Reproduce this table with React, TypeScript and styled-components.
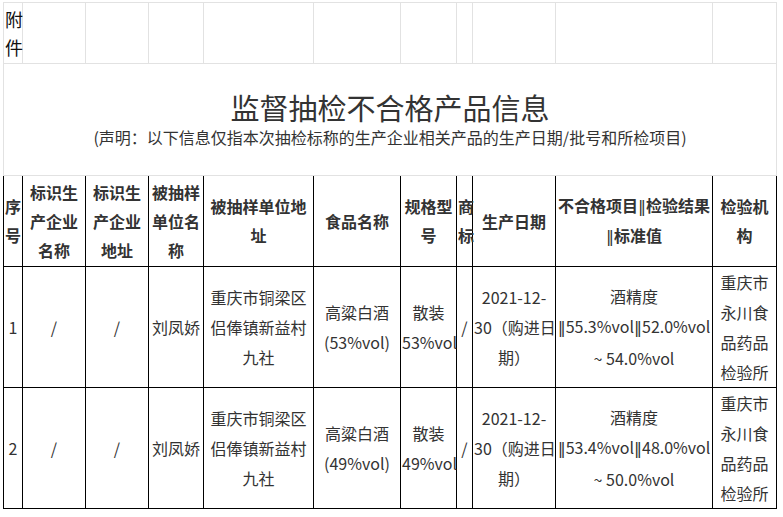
import React from "react";
import styled, { createGlobalStyle } from "styled-components";

const Global = createGlobalStyle`
  html, body { margin: 0; padding: 0; background: #fff; }
  body { font-family: "Noto Sans CJK SC", "Noto Sans", sans-serif; }
`;

const Page = styled.div`
  padding: 2px 0 0 3px;
`;

const Sheet = styled.table`
  border-collapse: collapse;
  table-layout: fixed;
  width: 774px;
  font-family: "Noto Sans CJK SC", "Noto Sans", sans-serif;
  color: #333;
`;

const Row = styled.tr<{ $h: number }>`
  height: ${(p) => p.$h}px;
`;

const BlankCell = styled.td`
  border: 1px solid #e2e2e2;
  padding: 0;
`;

const AttachCell = styled.td`
  border: 1px solid #e2e2e2;
  padding: 0 0 0 1px;
  font-size: 18px;
  line-height: 28px;
  color: #111;
  vertical-align: middle;
  text-align: left;
`;

const TitleCell = styled.td`
  border: 1px solid #e2e2e2;
  padding: 0;
  text-align: center;
  vertical-align: middle;
`;

const Title = styled.div`
  font-size: 29px;
  line-height: 34px;
  color: #333;
  padding-top: 4px;
`;

const Subtitle = styled.div`
  font-size: 16px;
  line-height: 26px;
  color: #333;
  padding-bottom: 4px;
`;

const HeadCell = styled.th`
  border: 1px solid #000;
  border-top-color: #e2e2e2;
  padding: 0 1px;
  font-size: 16px;
  line-height: 29px;
  font-weight: 700;
  color: #333;
  text-align: center;
  vertical-align: middle;
`;

const DataCell = styled.td`
  border: 1px solid #000;
  padding: 0 1px;
  font-size: 16px;
  line-height: 30px;
  color: #333;
  text-align: center;
  vertical-align: middle;
  white-space: nowrap;
  overflow: visible;
`;

const Bar = styled.span`
  font-family: "DejaVu Sans", sans-serif;
  font-size: 16px;
  font-weight: 400;
  letter-spacing: 0;
`;

const widths = [19, 63, 63, 55, 110, 87, 56, 16, 83, 157, 64];

type Rec = {
  no: string;
  food: string;
  spec: string;
  result: string;
  std: string;
  end: string;
};

const rows: Rec[] = [
  { no: "1", food: "(53%vol)", spec: "53%vol", result: "55.3%vol", std: "52.0%vol", end: "~ 54.0%vol" },
  { no: "2", food: "(49%vol)", spec: "49%vol", result: "53.4%vol", std: "48.0%vol", end: "~ 50.0%vol" },
];

const Lines: React.FC<{ items: React.ReactNode[] }> = ({ items }) => (
  <>
    {items.map((it, i) => (
      <React.Fragment key={i}>
        {i > 0 && <br />}
        {it}
      </React.Fragment>
    ))}
  </>
);

export default function App() {
  return (
    <Page>
      <Global />
      <Sheet>
        <colgroup>
          {widths.map((w, i) => (
            <col key={i} style={{ width: w }} />
          ))}
        </colgroup>
        <tbody>
          <Row $h={61}>
            <AttachCell>附<br />件</AttachCell>
            {widths.slice(1).map((_, i) => (
              <BlankCell key={i} />
            ))}
          </Row>
          <Row $h={112}>
            <TitleCell colSpan={11}>
              <Title>监督抽检不合格产品信息</Title>
              <Subtitle>(声明：以下信息仅指本次抽检标称的生产企业相关产品的生产日期/批号和所检项目)</Subtitle>
            </TitleCell>
          </Row>
          <Row $h={91}>
            <HeadCell>序<br />号</HeadCell>
            <HeadCell><Lines items={["标识生", "产企业", "名称"]} /></HeadCell>
            <HeadCell><Lines items={["标识生", "产企业", "地址"]} /></HeadCell>
            <HeadCell><Lines items={["被抽样", "单位名", "称"]} /></HeadCell>
            <HeadCell><Lines items={["被抽样单位地", "址"]} /></HeadCell>
            <HeadCell>食品名称</HeadCell>
            <HeadCell><Lines items={["规格型", "号"]} /></HeadCell>
            <HeadCell><Lines items={["商", "标"]} /></HeadCell>
            <HeadCell>生产日期</HeadCell>
            <HeadCell><Lines items={[<span key="a">不合格项目<Bar>‖</Bar>检验结果</span>, <span key="b"><Bar>‖</Bar>标准值</span>]} /></HeadCell>
            <HeadCell><Lines items={["检验机", "构"]} /></HeadCell>
          </Row>
          {rows.map((r) => (
            <Row $h={120} key={r.no}>
              <DataCell>{r.no}</DataCell>
              <DataCell>/</DataCell>
              <DataCell>/</DataCell>
              <DataCell>刘凤娇</DataCell>
              <DataCell><Lines items={["重庆市铜梁区", "侣俸镇新益村", "九社"]} /></DataCell>
              <DataCell><Lines items={["高粱白酒", r.food]} /></DataCell>
              <DataCell><Lines items={["散装", r.spec]} /></DataCell>
              <DataCell>/</DataCell>
              <DataCell><Lines items={["2021-12-", "30（购进日", "期）"]} /></DataCell>
              <DataCell>
                <Lines
                  items={[
                    "酒精度",
                    <span key="m"><Bar>‖</Bar>{r.result}<Bar>‖</Bar>{r.std}</span>,
                    r.end,
                  ]}
                />
              </DataCell>
              <DataCell><Lines items={["重庆市", "永川食", "品药品", "检验所"]} /></DataCell>
            </Row>
          ))}
        </tbody>
      </Sheet>
    </Page>
  );
}
